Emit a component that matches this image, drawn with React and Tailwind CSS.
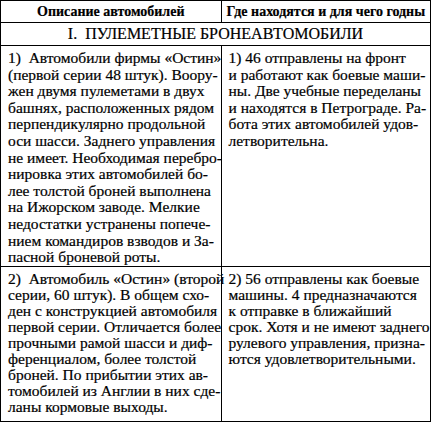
import React from "react";

const r1l = [
  "1)  Автомобили фирмы «Остин»",
  "(первой серии 48 штук). Воору-",
  "жен двумя пулеметами в двух",
  "башнях, расположенных рядом",
  "перпендикулярно продольной",
  "оси шасси. Заднего управления",
  "не имеет. Необходимая перебро-",
  "нировка этих автомобилей бо-",
  "лее толстой броней выполнена",
  "на Ижорском заводе. Мелкие",
  "недостатки устранены попече-",
  "нием командиров взводов и За-",
  "пасной броневой роты.",
];
const r1r = [
  "1) 46 отправлены на фронт",
  "и работают как боевые маши-",
  "ны. Две учебные переделаны",
  "и находятся в Петрограде. Ра-",
  "бота этих автомобилей удов-",
  "летворительна.",
];
const r2l = [
  "2)  Автомобиль «Остин» (второй",
  "серии, 60 штук). В общем схо-",
  "ден с конструкцией автомобиля",
  "первой серии. Отличается более",
  "прочными рамой шасси и диф-",
  "ференциалом, более толстой",
  "броней. По прибытии этих ав-",
  "томобилей из Англии в них сде-",
  "ланы кормовые выходы.",
];
const r2r = [
  "2) 56 отправлены как боевые",
  "машины. 4 предназначаются",
  "к отправке в ближайший",
  "срок. Хотя и не имеют заднего",
  "рулевого управления, призна-",
  "ются удовлетворительными.",
];

function Cell({ lines, className = "" }) {
  return (
    <div className={"pl-[7px] pr-[2px] pt-[4px] text-[15.5px] " + className}>
      {lines.map((l, i) => (
        <div key={i} className="whitespace-pre">
          {l}
        </div>
      ))}
    </div>
  );
}

export default function App() {
  return (
    <div className="w-[431px] h-[422px] bg-white text-black font-['Liberation_Serif',serif] [-webkit-text-stroke:0.2px_#000]">
      <div className="w-[431px] h-[422px] border-[1.5px] border-black flex flex-col">
        <div className="h-[22px] grid grid-cols-[220.5px_1fr] border-b-[1.5px] border-black font-bold text-[14px]">
          <div className="flex items-center justify-center border-r-[1.5px] border-black">
            Описание автомобилей
          </div>
          <div className="flex items-center justify-center">Где находятся и для чего годны</div>
        </div>
        <div className="h-[23px] flex items-center justify-center border-b-[1.5px] border-black text-[16px] whitespace-pre">
          I.  ПУЛЕМЕТНЫЕ БРОНЕАВТОМОБИЛИ
        </div>
        <div className="h-[221px] grid grid-cols-[220.5px_1fr] border-b-[1.5px] border-black leading-[16.6px]">
          <Cell lines={r1l} className="border-r-[1.5px] border-black" />
          <Cell lines={r1r} />
        </div>
        <div className="flex-1 grid grid-cols-[220.5px_1fr] leading-[16px]">
          <Cell lines={r2l} className="border-r-[1.5px] border-black" />
          <Cell lines={r2r} />
        </div>
      </div>
    </div>
  );
}
